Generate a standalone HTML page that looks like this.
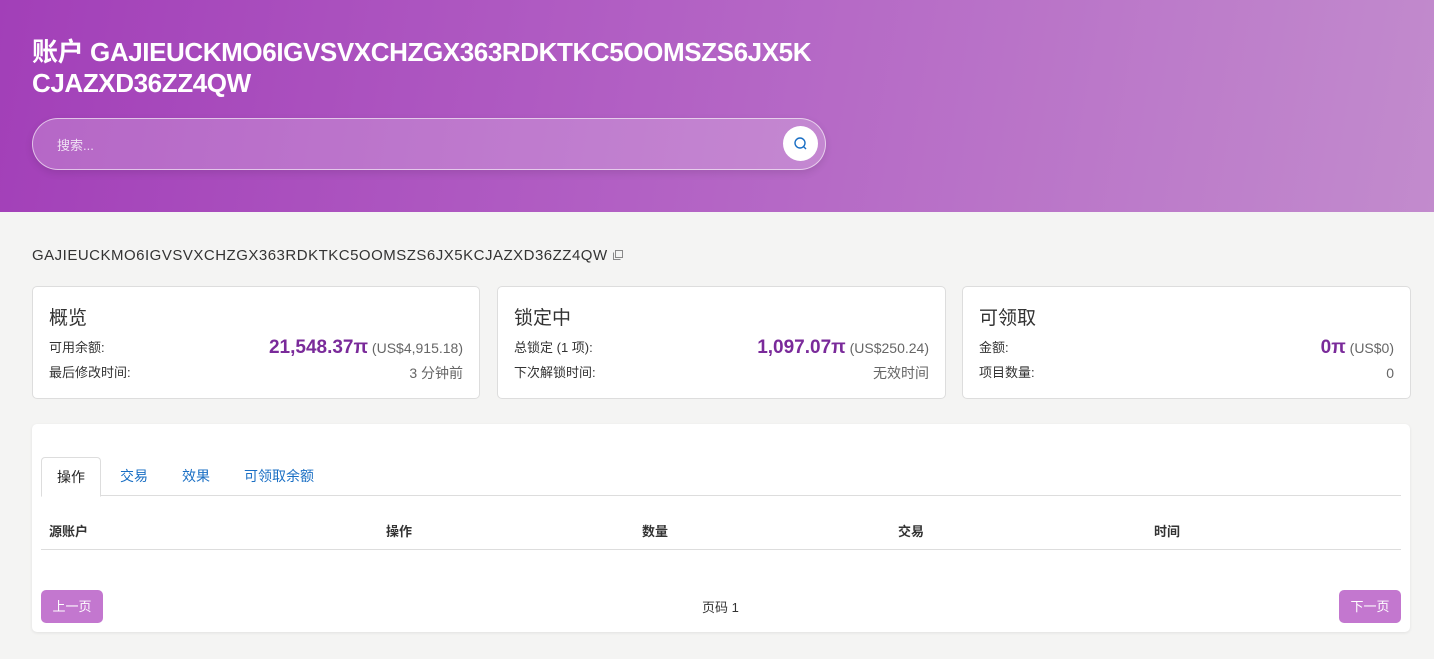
<!DOCTYPE html>
<html><head><meta charset="utf-8"><style>
*{box-sizing:border-box;margin:0;padding:0}
body{width:1434px;height:659px;overflow:hidden;background:#f4f4f3;font-family:"Liberation Sans","Noto Sans CJK SC",sans-serif;color:#222;position:relative}
.hdr{position:absolute;left:0;top:0;width:1434px;height:212px;background:linear-gradient(100deg,#a23fb8 0%,#b260c4 45%,#c28bcd 100%)}
.title{position:absolute;left:32px;top:37px;color:#fff;font-size:26px;font-weight:bold;line-height:31px;width:850px;letter-spacing:-0.4px}
.search{position:absolute;left:32px;top:118px;width:794px;height:52px;border-radius:26px;border:1px solid rgba(255,255,255,.6);background:rgba(255,255,255,.2);box-shadow:0 3px 8px rgba(0,0,0,.1)}
.search span{position:absolute;left:24px;top:16px;font-size:13px;color:rgba(255,255,255,.8)}
.sbtn{position:absolute;left:750px;top:7px;width:35px;height:35px;border-radius:50%;background:#fff}
.addr{position:absolute;left:32px;top:247px;font-size:15px;color:#333;letter-spacing:0.5px}
.card{position:absolute;top:286px;height:113px;background:#fff;border:1px solid #ddd;border-radius:5px}
.card h3{position:absolute;left:16px;top:16px;font-size:19px;font-weight:normal;color:#333}
.row{position:absolute;left:16px;right:16px;font-size:13px;color:#333;line-height:20px;height:20px}
.row .r{position:absolute;right:0;top:0;color:#666;font-size:14px;line-height:20px}
.big{color:#7a2a9a;font-weight:bold;font-size:19px;line-height:20px}
.panel{position:absolute;left:32px;top:424px;width:1378px;height:208px;background:#fff;border-radius:5px;box-shadow:0 1px 3px rgba(0,0,0,.08)}
.tabs{position:absolute;left:9px;top:33px;width:1360px;height:39px;border-bottom:1px solid #ddd}
.tab{position:absolute;top:0;height:39px;line-height:38px;font-size:14px;color:#1a6fc4}
.tab.a{border:1px solid #ddd;border-bottom:1px solid #fff;border-radius:4px 4px 0 0;color:#222;background:#fff;padding:0 15px;height:40px}
.th{position:absolute;top:97px;font-size:13px;font-weight:bold;color:#333}
.line{position:absolute;left:9px;top:125px;width:1360px;height:1px;background:#ddd}
.btn{position:absolute;top:166px;height:33px;width:62px;border-radius:5px;background:#c377cf;color:#fff;font-size:13px;text-align:center;line-height:33px}
</style></head><body>
<div class="hdr">
<div class="title">账户 GAJIEUCKMO6IGVSVXCHZGX363RDKTKC5OOMSZS6JX5K<br>CJAZXD36ZZ4QW</div>
<div class="search"><span>搜索...</span><div class="sbtn"><svg width="35" height="35" viewBox="0 0 35 35"><circle cx="17" cy="17" r="5" fill="none" stroke="#1a6fc4" stroke-width="1.4"/><line x1="20.6" y1="20.6" x2="23" y2="23" stroke="#1a6fc4" stroke-width="1.4"/></svg></div></div>
</div>
<div class="addr">GAJIEUCKMO6IGVSVXCHZGX363RDKTKC5OOMSZS6JX5KCJAZXD36ZZ4QW <svg width="12" height="12" viewBox="0 0 12 12" style="vertical-align:-1px"><rect x="3.5" y="1.5" width="7" height="7" fill="none" stroke="#888"/><path d="M1.5 3.5v7h7" fill="none" stroke="#888"/></svg></div>

<div class="card" style="left:32px;width:448px"><h3>概览</h3>
<div class="row" style="top:51px">可用余额:<span class="r"><span class="big">21,548.37π</span> (US$4,915.18)</span></div>
<div class="row" style="top:76px">最后修改时间:<span class="r">3 分钟前</span></div></div>
<div class="card" style="left:497px;width:449px"><h3>锁定中</h3>
<div class="row" style="top:51px">总锁定 (1 项):<span class="r"><span class="big">1,097.07π</span> (US$250.24)</span></div>
<div class="row" style="top:76px">下次解锁时间:<span class="r">无效时间</span></div></div>
<div class="card" style="left:962px;width:449px"><h3>可领取</h3>
<div class="row" style="top:51px">金额:<span class="r"><span class="big">0π</span> (US$0)</span></div>
<div class="row" style="top:76px">项目数量:<span class="r">0</span></div></div>

<div class="panel">
<div class="tabs">
<div class="tab a" style="left:0">操作</div>
<div class="tab" style="left:79px">交易</div>
<div class="tab" style="left:141px">效果</div>
<div class="tab" style="left:203px">可领取余额</div>
</div>
<div class="th" style="left:17px">源账户</div>
<div class="th" style="left:354px">操作</div>
<div class="th" style="left:610px">数量</div>
<div class="th" style="left:866px">交易</div>
<div class="th" style="left:1122px">时间</div>
<div class="line"></div>
<div class="btn" style="left:9px">上一页</div>
<div style="position:absolute;left:670px;top:173px;font-size:13px;color:#333">页码 1</div>
<div class="btn" style="left:1307px">下一页</div>
</div>
</body></html>
